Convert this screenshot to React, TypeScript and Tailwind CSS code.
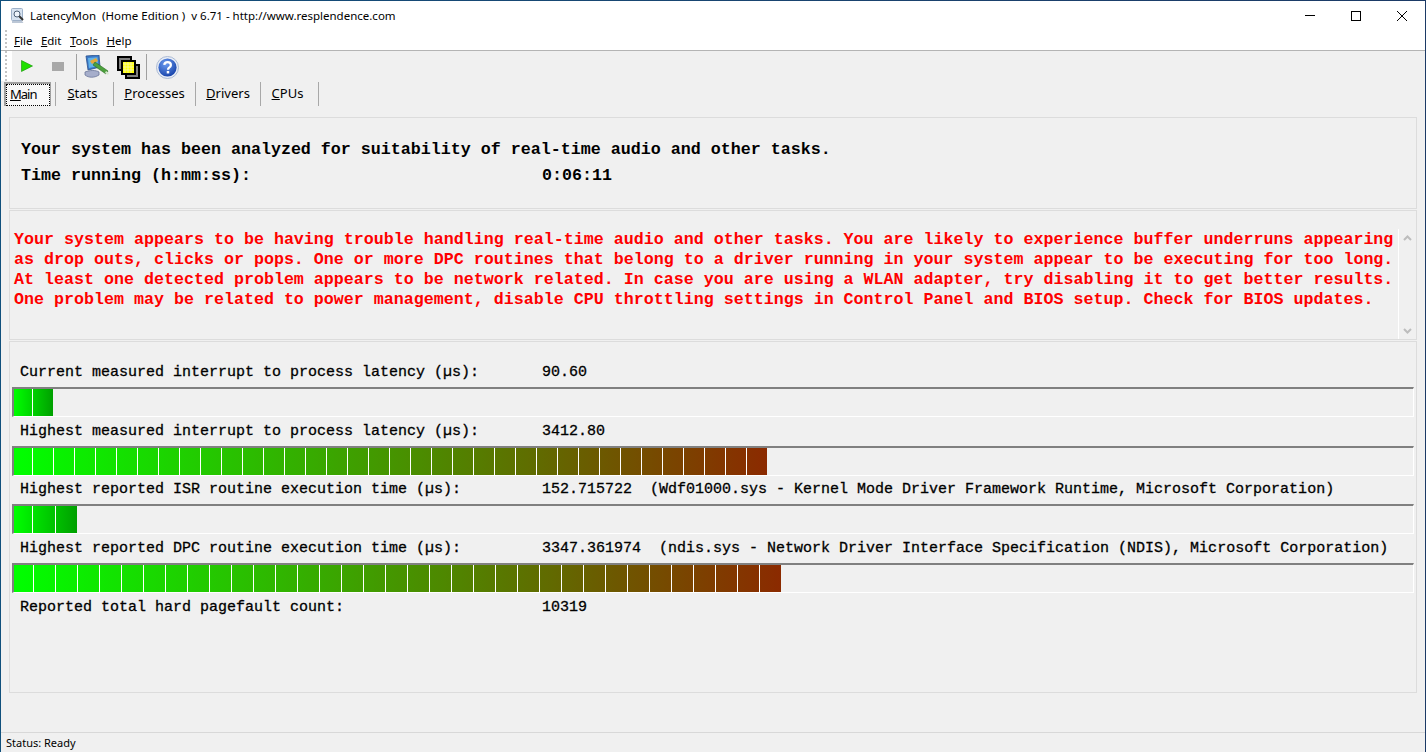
import React from "react";

const mono = "[font-family:'Liberation_Mono','Courier_New',monospace]";
const stroke = "font-normal [-webkit-text-stroke:0.3px_black]";
const grip =
  "w-[2px] bg-[repeating-linear-gradient(to_bottom,#c4c4c4_0,#c4c4c4_2px,transparent_2px,transparent_4px)]";

type BarProps = { widths: number[]; from: string; to: string };

function Bar({ widths, from, to }: BarProps) {
  const total = widths.reduce((a, b) => a + b, 0);
  return (
    <div className="ml-[2px] mr-[2px] h-[30px] border-t-2 border-l-2 border-t-[#808080] border-l-[#808080] border-b border-r border-b-white border-r-white flex">
      <div
        className="flex h-full"
        style={{ width: total, background: `linear-gradient(to right, ${from}, ${to})` }}
      >
        {widths.map((w, i) => (
          <div
            key={i}
            className="h-full box-border border-r border-white last:border-r-0"
            style={{ width: w }}
          />
        ))}
      </div>
    </div>
  );
}

function Row({ label, value, extra, h, pt }: { label: string; value: string; extra?: string; h: string; pt: string }) {
  return (
    <div className={`${h} ${pt} flex items-start pl-[10px] text-[15px] leading-[17px] text-black whitespace-pre ${mono}`}>
      <span className={`w-[522px] ${stroke}`}>{label}</span>
      <span className={stroke}>{value}</span>
      {extra ? <span className={stroke}>{extra}</span> : null}
    </div>
  );
}

function Menu({ hot, rest }: { hot: string; rest: string }) {
  return (
    <span>
      <span className="underline">{hot}</span>
      {rest}
    </span>
  );
}

function Tab({ hot, rest, w }: { hot: string; rest: string; w: string }) {
  return (
    <div className={`h-[24px] flex items-center justify-center border-r border-r-[#a8a8a8] ${w}`}>
      <span>
        <span className="underline">{hot}</span>
        {rest}
      </span>
    </div>
  );
}

function AppIcon() {
  return (
    <svg width="16" height="16" viewBox="0 0 16 16">
      <rect x="1.5" y="0.5" width="11" height="12" rx="1" fill="#d6e2f0" stroke="#9db0c8" />
      <path d="M2 13h10l1.5 2H2z" fill="#bcc7d6" />
      <circle cx="7" cy="6" r="3" fill="#eef4fb" stroke="#4f6278" />
      <path d="M9.3 8.3l3.7 3.7" stroke="#333" strokeWidth="2" />
    </svg>
  );
}

function PCIcon() {
  return (
    <svg width="25" height="23" viewBox="0 0 25 23">
      <path d="M2 1 L15 0 L16 12 L4 15 Z" fill="#3b78c8" stroke="#29508a" strokeWidth="0.8" />
      <path d="M4 3 L13.500 2.200 L14 11 L5 13 Z" fill="#62b3e8" />
      <path d="M6 6 L12 3 L14 6 L8 9 Z" fill="#e3a93c" />
      <path d="M1 17 C6 15 12 15 15 17 L15 20 C10 23 5 23 1 20 Z" fill="#a6aecb" stroke="#6b7699" strokeWidth="0.8" />
      <path d="M11 7 L24 16 L22 19 L9 10 Z" fill="#4ca03c" stroke="#2a6b22" strokeWidth="0.6" />
      <path d="M22 16 L25 18 L24 20 L21 18 Z" fill="#d8e8d0" />
    </svg>
  );
}

function WindowsIcon() {
  return (
    <svg width="23" height="23" viewBox="0 0 23 23">
      <rect x="1" y="1" width="13" height="13" fill="#808080" stroke="#000" strokeWidth="2" />
      <rect x="9" y="9" width="13" height="13" fill="#808080" stroke="#000" strokeWidth="2" />
      <rect x="5" y="5" width="13" height="13" fill="#ffff00" stroke="#000" strokeWidth="2" />
      <path d="M6 8h11M6 11h11M6 14h11M8 6v11M11 6v11M14 6v11" stroke="#f4f4c0" strokeWidth="0.8" />
    </svg>
  );
}

function HelpIcon() {
  return (
    <svg width="23" height="23" viewBox="0 0 24 24">
      <defs>
        <radialGradient id="hg" cx="40%" cy="30%" r="75%">
          <stop offset="0%" stopColor="#6c9cf0" />
          <stop offset="100%" stopColor="#1440a8" />
        </radialGradient>
      </defs>
      <circle cx="12" cy="12" r="11.5" fill="#e8edf6" stroke="#a8b8d2" />
      <circle cx="12" cy="12" r="9.500" fill="url(#hg)" />
      <path
        d="M8.6 9.3C8.8 7.4 10.2 6.4 12.1 6.4c2 0 3.4 1.2 3.4 2.9 0 1.4-.8 2.1-1.800 2.800-.8.6-1.100 1-1.100 1.900v.4"
        fill="none"
        stroke="#fff"
        strokeWidth="2.4"
      />
      <rect x="11.2" y="15.6" width="2.6" height="2.6" fill="#fff" />
    </svg>
  );
}

function Sep() {
  return <div className="w-[1px] h-[26px] bg-[#a0a0a0] self-end mb-[1px]" />;
}

const RED_LINES = [
  "Your system appears to be having trouble handling real-time audio and other tasks. You are likely to experience buffer underruns appearing",
  "as drop outs, clicks or pops. One or more DPC routines that belong to a driver running in your system appear to be executing for too long.",
  "At least one detected problem appears to be network related. In case you are using a WLAN adapter, try disabling it to get better results.",
  "One problem may be related to power management, disable CPU throttling settings in Control Panel and BIOS setup. Check for BIOS updates.",
];

const repeat = (n: number, w: number) => Array.from({ length: n }, () => w);

export default function App() {
  return (
    <div className="w-[1426px] h-[752px] overflow-hidden flex flex-col bg-[#f0f0f0] border-l border-r border-l-[#10507c] border-r-[#1c3a66] [font-family:'Noto_Sans','Open_Sans',sans-serif] text-[12px] text-black">
      <div className="h-px shrink-0 bg-gradient-to-r from-[#10507c] to-[#1c3a66]" />
      {/* title bar */}
      <div className="h-[29px] bg-white flex items-center shrink-0">
        <div className="ml-[9px] mr-[4px] flex"><AppIcon /></div>
        <span className="text-[11.5px]">LatencyMon&nbsp; (Home Edition ) &nbsp;v 6.71 - http://www.resplendence.com</span>
        <div className="ml-auto flex items-center h-full">
          <div className="w-[46px] flex justify-center">
            <div className="w-[10px] h-px bg-black" />
          </div>
          <div className="w-[46px] flex justify-center">
            <div className="w-[10px] h-[10px] border border-black" />
          </div>
          <div className="w-[46px] flex justify-center">
            <svg width="10" height="10" viewBox="0 0 10 10">
              <path d="M0 0L10 10M10 0L0 10" stroke="#000" strokeWidth="1" />
            </svg>
          </div>
        </div>
      </div>
      {/* menu */}
      <div className="h-[21px] bg-white border-b border-b-[#b4b4b4] flex items-center shrink-0 text-[11.5px]">
        <div className={`${grip} h-full ml-[4px] mr-[7px]`} />
        <div className="flex items-center gap-[8.5px] pt-[2px]">
          <Menu hot="F" rest="ile" />
          <Menu hot="E" rest="dit" />
          <Menu hot="T" rest="ools" />
          <Menu hot="H" rest="elp" />
        </div>
      </div>
      {/* toolbar */}
      <div className="h-[30px] flex items-center shrink-0">
        <div className="w-[11px] h-full bg-white pl-[4px]">
          <div className={`${grip} h-full`} />
        </div>
        <svg className="ml-[9px]" width="12" height="12" viewBox="0 0 12 12">
          <path d="M0.500 0.500 L11.500 6 L0.500 11.500 Z" fill="#1fe000" stroke="#109000" strokeWidth="0.6" />
        </svg>
        <div className="ml-[19px] w-[12px] h-[9px] bg-[#a8a8a8]" />
        <div className="ml-[12px] flex h-full"><Sep /></div>
        <div className="ml-[7px] flex"><PCIcon /></div>
        <div className="ml-[8px] flex mt-[2px]"><WindowsIcon /></div>
        <div className="ml-[6px] flex h-full"><Sep /></div>
        <div className="ml-[9px] flex mt-[2px]"><HelpIcon /></div>
      </div>
      {/* tabs */}
      <div className="h-[26px] flex items-start pt-[1px] pl-[3px] shrink-0 text-[13px]">
        <div className="h-[24px] w-[52px] flex border-r border-r-[#a8a8a8]">
          <div className="w-[47px] h-full border-t-2 border-l-2 border-r border-[#a0a0a0]">
            <div className="h-full border border-dotted border-black bg-[#f8f8f8] pl-[3px] flex items-center">
              <span className="tracking-[-1px]"><span className="underline">M</span>ain</span>
            </div>
          </div>
        </div>
        <Tab hot="S" rest="tats" w="w-[58px] pr-[4px]" />
        <Tab hot="P" rest="rocesses" w="w-[82px]" />
        <Tab hot="D" rest="rivers" w="w-[65px]" />
        <Tab hot="C" rest="PUs" w="w-[58px] pr-[4px]" />
      </div>
      {/* panels */}
      <div className="mt-[10px] ml-[8px] w-[1408px] flex flex-col gap-[1px] flex-1 min-h-0">
        <div className={`h-[92px] shrink-0 border border-[#dcdcdc] pl-[11px] pt-[19px] text-[16.67px] font-bold leading-[26px] whitespace-pre ${mono}`}>
          <div>Your system has been analyzed for suitability of real-time audio and other tasks.</div>
          <div className="flex">
            <span className="w-[521px]">Time running (h:mm:ss):</span>
            <span>0:06:11</span>
          </div>
        </div>
        <div className="h-[130px] shrink-0 border border-[#dcdcdc] flex">
          <div className={`flex-1 pl-[4px] pt-[19px] text-[16.67px] font-bold leading-[20px] text-[#ff0000] whitespace-pre ${mono}`}>
            {RED_LINES.map((l) => (
              <div key={l}>{l}</div>
            ))}
          </div>
          <div className="w-[18px] border-l border-white flex flex-col items-center justify-between pt-[6px] pb-[5px] mt-[18px]">
            <svg width="9" height="6" viewBox="0 0 9 6">
              <path d="M1 5L4.500 1.500L8 5" fill="none" stroke="#bdbdbd" strokeWidth="2" />
            </svg>
            <svg width="9" height="6" viewBox="0 0 9 6">
              <path d="M1 1L4.500 4.500L8 1" fill="none" stroke="#bdbdbd" strokeWidth="2" />
            </svg>
          </div>
        </div>
        <div className="h-[352px] shrink-0 border border-[#dcdcdc] pt-[16px]">
          <Row h="h-[29px]" pt="pt-[6px]" label="Current measured interrupt to process latency (µs):" value="90.60" />
          <Bar widths={[19, 20]} from="#00ff00" to="#00a000" />
          <Row h="h-[29px]" pt="pt-[6px]" label="Highest measured interrupt to process latency (µs):" value="3412.80" />
          <Bar widths={[19, ...repeat(34, 21), 20]} from="#00ff00" to="#8b2a00" />
          <Row h="h-[28px]" pt="pt-[5px]" label="Highest reported ISR routine execution time (µs):" value="152.715722" extra="  (Wdf01000.sys - Kernel Mode Driver Framework Runtime, Microsoft Corporation)" />
          <Bar widths={[19, 23, 21]} from="#00ff00" to="#00a000" />
          <Row h="h-[29px]" pt="pt-[6px]" label="Highest reported DPC routine execution time (µs):" value="3347.361974" extra="  (ndis.sys - Network Driver Interface Specification (NDIS), Microsoft Corporation)" />
          <Bar widths={[20, ...repeat(33, 22), 21]} from="#00ff00" to="#8b2a00" />
          <Row h="h-[29px]" pt="pt-[6px]" label="Reported total hard pagefault count:" value="10319" />
        </div>
      </div>
      {/* status */}
      <div className="h-[20px] shrink-0 border-t border-t-[#d8d8d8] pl-[5px] pt-[1px] flex items-center text-[11px]">
        Status: Ready
      </div>
    </div>
  );
}
